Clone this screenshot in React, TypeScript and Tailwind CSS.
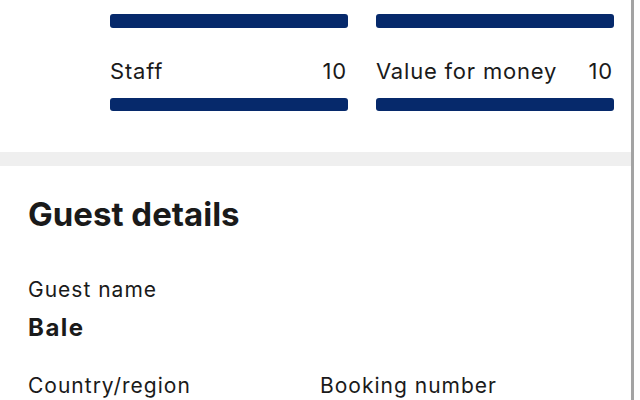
export default function App() {
  const scores = [
    { label: 'Staff', value: 10 },
    { label: 'Value for money', value: 10 },
  ];

  return (
    <div className="w-[640px] h-[400px] overflow-hidden bg-white flex text-[#1a1a1a] font-['Inter',sans-serif]">
      <div className="w-[631px] flex flex-col">
        {/* Review scores */}
        <div className="pl-[110px] pr-[17px] pt-[14px] grid grid-cols-2 gap-x-[28px]">
          {scores.map((s) => (
            <div key={s.label} className="flex flex-col">
              <div className="h-[14px] rounded-[3px] bg-[#06296b]" />
              <div className="pt-[29px] pb-[13px] flex justify-between items-center text-[22px] leading-[28px] tracking-[0.8px]">
                <span>{s.label}</span>
                <span className="pr-[1px]">{s.value}</span>
              </div>
              <div className="h-[13px] rounded-[3px] bg-[#06296b]" />
            </div>
          ))}
        </div>

        <div className="mt-[41px] h-[14px] bg-[#efefef]" />

        {/* Guest details */}
        <div className="px-[28px] pt-[30px]">
          <h2 className="text-[33px] leading-[36px] font-bold">Guest details</h2>
          <div className="mt-[46px] text-[21px] leading-[24px] tracking-[1px]">Guest name</div>
          <div className="mt-[12px] text-[24px] leading-[28px] font-bold tracking-[1.5px]">Bale</div>
          <div className="mt-[32px] grid grid-cols-[292px_1fr] text-[21px] leading-[24px] tracking-[1px]">
            <span>Country/region</span>
            <span>Booking number</span>
          </div>
        </div>
      </div>
      <div className="w-[3px] bg-[#a3a3a3]" />
      <div className="flex-1 bg-white" />
    </div>
  );
}
